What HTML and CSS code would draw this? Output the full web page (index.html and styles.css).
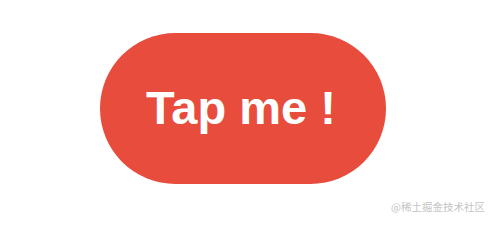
FILE: index.html
```html
<!DOCTYPE html>
<html lang="zh">
<head>
<meta charset="utf-8">
<link rel="stylesheet" href="styles.css">
</head>
<body>
<main class="stage">
  <button class="tap-button" type="button">Tap me !</button>
</main>
<div class="watermark">@稀土掘金技术社区</div>
</body>
</html>
```
FILE: styles.css
```css
html, body {
  margin: 0;
  padding: 0;
  background: #ffffff;
}
body {
  width: 490px;
  height: 218px;
  position: relative;
  overflow: hidden;
}
.stage {
  display: flex;
  align-items: flex-start;
  justify-content: flex-start;
  padding: 33px 0 0 100px;
}
.tap-button {
  width: 286px;
  height: 151px;
  border: none;
  border-radius: 76px;
  background: #e74c3c;
  color: #ffffff;
  font-family: "Liberation Sans", Arial, sans-serif;
  font-weight: bold;
  font-size: 47px;
  padding: 0 0 2px 0;
  margin: 0;
  display: flex;
  align-items: center;
  justify-content: center;
  text-indent: -4px;
  line-height: 1;
}
.watermark {
  position: absolute;
  right: 5px;
  bottom: 6px;
  font-family: "Noto Sans CJK SC", "Noto Sans", sans-serif;
  font-size: 10.5px;
  color: #c4c4c4;
  line-height: 1;
}
```
